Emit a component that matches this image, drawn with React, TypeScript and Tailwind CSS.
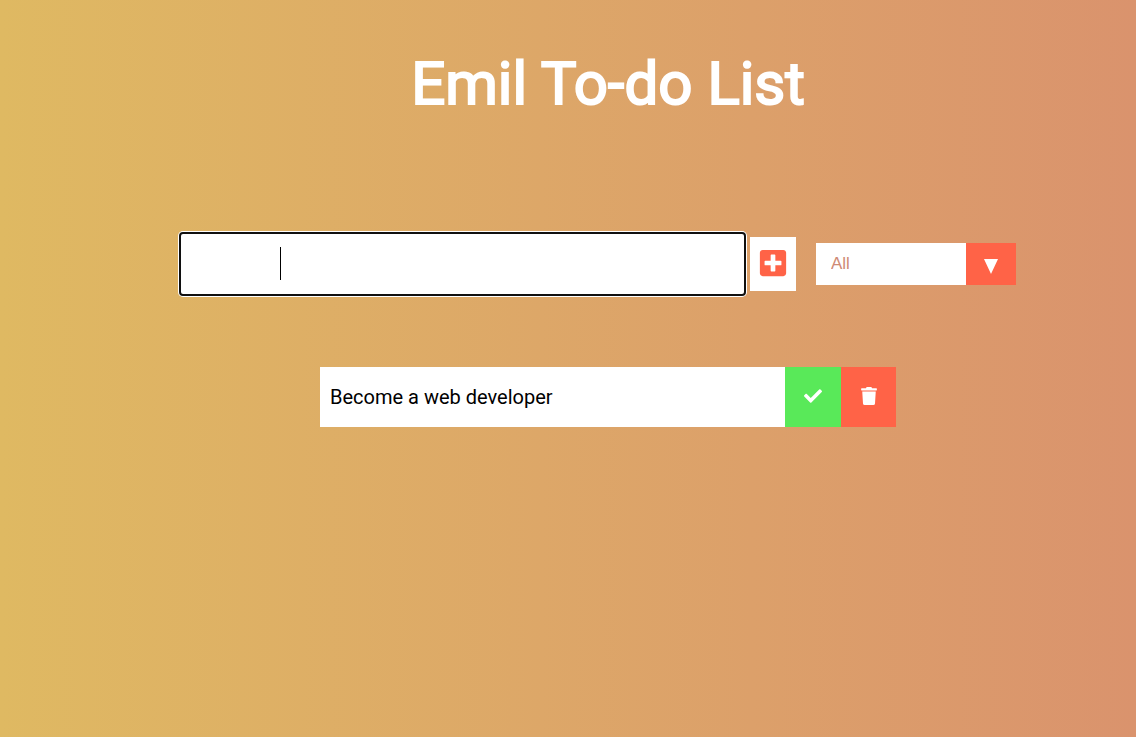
import { useState, type FormEvent } from "react";
import { FaCheck, FaPlusSquare, FaTrash } from "react-icons/fa";

type Todo = { id: number; text: string; done: boolean };

export default function App() {
  const [todos, setTodos] = useState<Todo[]>([
    { id: 1, text: "Become a web developer", done: false },
  ]);
  const [draft, setDraft] = useState("");
  const [filter, setFilter] = useState("all");

  const addTodo = (event: FormEvent) => {
    event.preventDefault();
    if (!draft.trim()) return;
    setTodos([...todos, { id: Date.now(), text: draft, done: false }]);
    setDraft("");
  };

  const shown = todos.filter(
    (todo) => filter === "all" || todo.done === (filter === "completed"),
  );

  return (
    <div className="min-h-screen bg-linear-to-r from-[#dfb962] to-[#da936d] font-['Roboto',sans-serif]">
      <header className="flex justify-center pt-12 pl-20">
        <h1 className="text-[60px] leading-[72px] font-normal text-white [-webkit-text-stroke:2px_white]">
          Emil To-do List
        </h1>
      </header>

      <form onSubmit={addTodo} className="flex items-center justify-center pt-28 pl-[59px]">
        <div className="relative mr-1 h-16 w-full max-w-[567px]">
          <input
            type="text"
            aria-label="New to-do"
            value={draft}
            onChange={(event) => setDraft(event.target.value)}
            className="h-full w-full rounded-sm border-2 border-[#101010] bg-white pr-4 pl-[99px] text-3xl text-black caret-transparent ring-1 ring-white outline-none"
          />
          {draft === "" && (
            <span className="pointer-events-none absolute top-[15px] left-[101px] h-[33px] w-px bg-black" />
          )}
        </div>
        <button
          type="submit"
          aria-label="Add to-do"
          className="mr-5 flex h-[54px] w-[46px] shrink-0 items-center justify-center bg-white pb-0.5 text-[30px] text-[#ff6347]"
        >
          <FaPlusSquare />
        </button>
        <div className="relative h-[42px] w-[200px] shrink-0">
          <select
            aria-label="Filter to-dos"
            value={filter}
            onChange={(event) => setFilter(event.target.value)}
            className="h-full w-full appearance-none bg-white pr-14 pl-[15px] font-['Liberation_Sans',sans-serif] text-[17px] text-[#cf8a75] outline-none"
          >
            <option value="all">All</option>
            <option value="completed">Completed</option>
            <option value="uncompleted">Uncompleted</option>
          </select>
          <span className="pointer-events-none absolute inset-y-0 right-0 flex w-[50px] items-center justify-center bg-[#ff6347] pt-1">
            <svg viewBox="0 0 14 15" className="h-[15px] w-3.5 fill-white" aria-hidden="true">
              <path d="M0 0h14L7 15z" />
            </svg>
          </span>
        </div>
      </form>

      <ul className="flex flex-col items-center gap-2 pt-[71px] pl-20">
        {shown.map((todo) => (
          <li key={todo.id} className="flex h-[60px] w-full max-w-[576px] bg-white">
            <span className="flex-1 px-2.5 text-xl leading-[60px] text-black">{todo.text}</span>
            <button
              type="button"
              aria-label="Complete"
              onClick={() =>
                setTodos(todos.map((t) => (t.id === todo.id ? { ...t, done: !t.done } : t)))
              }
              className="flex w-14 items-center justify-center bg-[#59e959] pb-0.5 text-lg text-white"
            >
              <FaCheck />
            </button>
            <button
              type="button"
              aria-label="Delete"
              onClick={() => setTodos(todos.filter((t) => t.id !== todo.id))}
              className="flex w-[55px] items-center justify-center bg-[#ff6347] pb-0.5 text-lg text-white"
            >
              <FaTrash />
            </button>
          </li>
        ))}
      </ul>
    </div>
  );
}
